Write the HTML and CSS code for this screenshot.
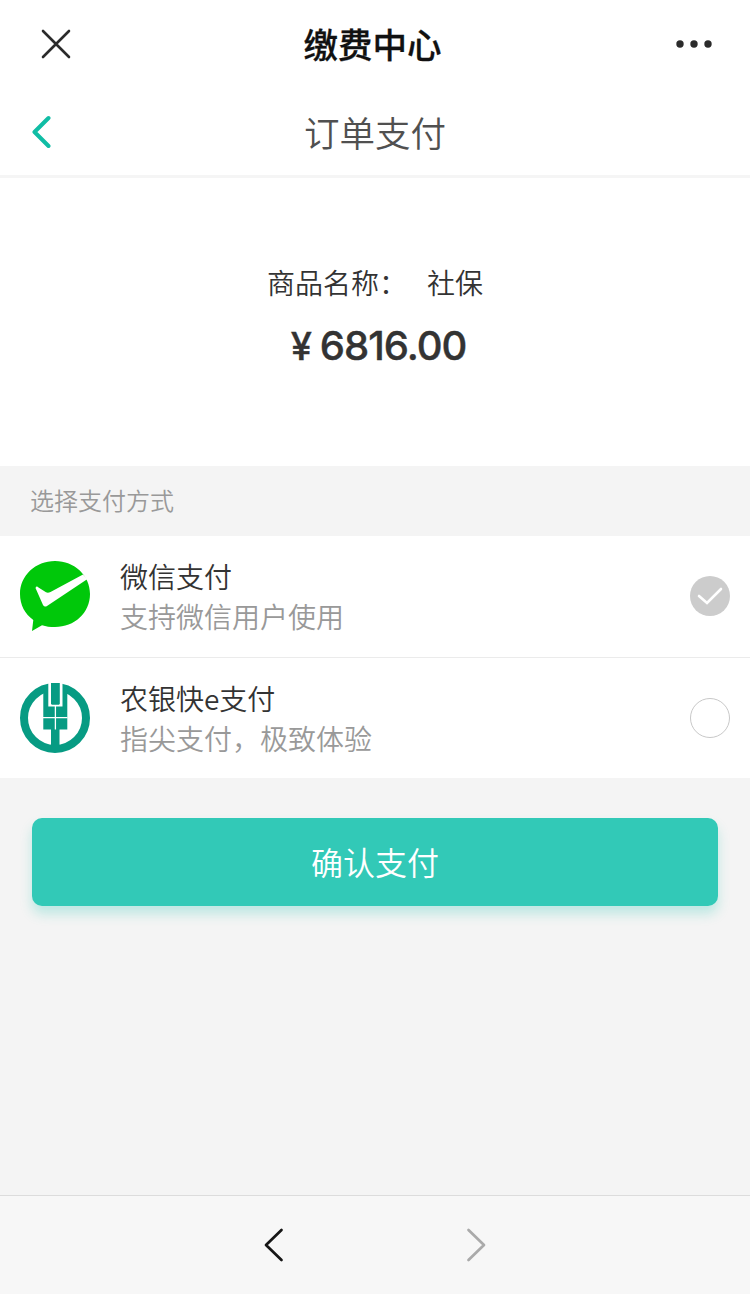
FILE: index.html
```html
<!DOCTYPE html>
<html lang="zh-CN">
<head>
<meta charset="utf-8">
<title>缴费中心</title>
<link rel="stylesheet" href="styles.css">
</head>
<body>
<div class="app">
  <header class="topbar">
    <svg class="icon-close" viewBox="0 0 32 32"><path d="M3 3L29 29M29 3L3 29"/></svg>
    <h1 class="topbar-title">缴费中心</h1>
    <svg class="icon-more" viewBox="0 0 36 8"><circle cx="4" cy="4" r="3.7"/><circle cx="18" cy="4" r="3.7"/><circle cx="32" cy="4" r="3.7"/></svg>
  </header>
  <nav class="subbar">
    <svg class="icon-back" viewBox="0 0 20 34"><path d="M17.500 3L3.500 17L17.500 31"/></svg>
    <h2 class="subbar-title">订单支付</h2>
  </nav>
  <section class="order">
    <p class="product"><span>商品名称：</span><span>社保</span></p>
    <p class="amount"><span class="currency">¥</span><span>6816.00</span></p>
  </section>
  <p class="section-label">选择支付方式</p>
  <ul class="methods">
    <li class="method">
      <svg class="logo" viewBox="0 0 70 70">
        <path fill="#00c80a" d="M35 0C54.500 0 70 14.500 70 33C70 51.800 54.500 66 35 66C30 66 26 65.600 22 64.200L12 70L13.300 59C5 53 0 44 0 33C0 14.500 15.500 0 35 0Z"/>
        <path fill="#fff" d="M15.500 27Q16.500 24.500 18.500 26.500L26 31.300Q28 32.300 30.500 31L63 13.500L67.500 18L27 45Q24.500 46.500 23 44Z"/>
      </svg>
      <div class="method-text"><p class="name">微信支付</p><p class="desc">支持微信用户使用</p></div>
      <svg class="radio" viewBox="0 0 40 40"><circle cx="20" cy="20" r="20" fill="#ccc"/><path d="M9 20L17 27L31 13" fill="none" stroke="#fff" stroke-width="2.600" stroke-linecap="round"/></svg>
    </li>
    <li class="method">
      <svg class="logo" viewBox="0 0 70 70">
        <circle cx="35" cy="35" r="31" fill="none" stroke="#079b83" stroke-width="8"/>
        <path fill="#079b83" d="M23.300 5H47.300V46.500H39.500V63H31V46.500H23.300Z"/>
        <path fill="#fff" d="M28.300 -1H42.500V23.500H28.300Z"/>
        <path fill="#079b83" d="M31 0H39.800V20.700L39 21.700H31.800L31 20.700Z"/>
        <path fill="none" stroke="#fff" stroke-width="1.300" d="M35.400 23V46.500M23 34.700H47.500"/>
      </svg>
      <div class="method-text"><p class="name">农银快e支付</p><p class="desc">指尖支付，极致体验</p></div>
      <svg class="radio" viewBox="0 0 40 40"><circle cx="20" cy="20" r="19.500" fill="#fff" stroke="#c8c8c8"/></svg>
    </li>
  </ul>
  <main class="action"><button class="confirm">确认支付</button></main>
  <footer class="toolbar">
    <svg class="arrow" viewBox="0 0 22 36"><path d="M18.500 3L3 18L18.500 33"/></svg>
    <svg class="arrow disabled" viewBox="0 0 22 36"><path d="M3.500 3L19 18L3.500 33"/></svg>
  </footer>
</div>
</body>
</html>
```
FILE: styles.css
```css
* { box-sizing: border-box; margin: 0; padding: 0; }
body { font-family: "Noto Sans CJK SC", sans-serif; font-weight: 350; color: #333; background: #f4f4f4; }
.app { display: flex; flex-direction: column; height: 1294px; width: 750px; }
svg { display: block; flex: none; fill: none; }
.topbar { display: flex; align-items: center; justify-content: space-between; height: 88px; padding: 0 38px 0 40px; background: #fff; }
.icon-close { width: 32px; height: 32px; stroke: #2b2b2b; stroke-width: 2.6; stroke-linecap: round; }
.topbar-title { margin: 0 3px 2px 0; font-size: 34.5px; font-weight: 500; line-height: 48px; color: #111; -webkit-text-stroke: 0.3px #111; }
.icon-more { width: 36px; height: 8px; fill: #2b2b2b; }
.subbar { display: grid; grid-template-columns: 20px 1fr 20px; align-items: center; height: 90px; padding: 0 31px; background: #fff; border-bottom: 3px solid #f5f5f5; }
.icon-back { width: 20px; height: 34px; stroke: #10bda5; stroke-width: 4; stroke-linecap: round; stroke-linejoin: round; }
.subbar-title { text-align: center; font-size: 35.5px; font-weight: 350; line-height: 50px; color: #505050; }
.order { height: 288px; padding-top: 84px; background: #fff; text-align: center; }
.product { display: flex; justify-content: center; gap: 20px; font-size: 28px; line-height: 40px; }
.amount { display: flex; justify-content: center; gap: 9px; margin: 18px 0 0 7px; font-family: Inter, sans-serif; font-size: 40px; font-weight: 500; line-height: 52px; letter-spacing: -1px; -webkit-text-stroke: 0.4px #333; }
.currency { font-size: 38px; }
.section-label { height: 70px; padding-left: 30px; font-size: 24px; line-height: 68px; color: #999; }
.methods { list-style: none; background: #fff; }
.method { display: flex; align-items: center; height: 121px; padding: 0 20px 2px; }
.method + .method { padding-bottom: 0; border-top: 1px solid #ebebeb; }
.logo { width: 70px; height: 70px; overflow: visible; }
.method-text { flex: 1; margin-left: 30px; font-size: 28px; line-height: 40px; }
.name { color: #333; }
.desc { color: #999; }
.radio { width: 40px; height: 40px; }
.action { flex: 1; padding: 40px 32px 0; }
.confirm { display: block; width: 100%; height: 88px; padding-bottom: 2px; border: 0; border-radius: 10px; background: #32c9b7; box-shadow: 0 8px 12px rgba(50, 201, 183, .28); color: #fff; font-family: inherit; font-size: 32px; font-weight: 350; }
.toolbar { display: flex; justify-content: center; align-items: center; gap: 180px; height: 99px; border-top: 1px solid #dcdcdc; background: #f7f7f7; }
.arrow { width: 22px; height: 36px; stroke: #161616; stroke-width: 2.7; stroke-linecap: round; stroke-linejoin: round; }
.disabled { stroke: #aaa; }
```
